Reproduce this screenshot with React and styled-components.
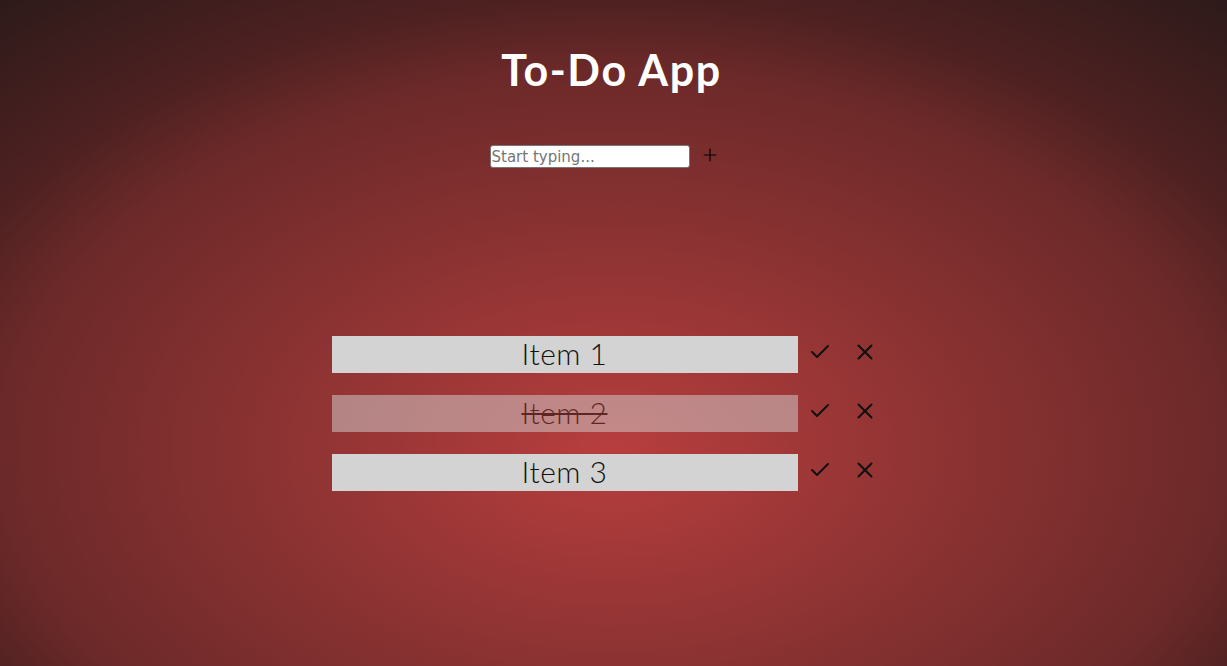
import styled, { createGlobalStyle } from "styled-components";
import { Check, X, Plus } from "lucide-react";

const GlobalStyle = createGlobalStyle`
  html, body {
    margin: 0;
    padding: 0;
  }
  body {
    min-height: 666px;
    background: radial-gradient(
      ellipse 900px 560px at 613px 450px,
      #b83e3e 0%,
      #8b3232 39%,
      #6c2929 68%,
      #4f2121 80%,
      #2e1a1a 105%
    );
    background-color: #2e1a1a;
    font-family: Lato, "Open Sans", sans-serif;
  }
`;

const items = [
  { id: 1, text: "Item 1", done: false },
  { id: 2, text: "Item 2", done: true },
  { id: 3, text: "Item 3", done: false },
];

const App = () => {
  return (
    <>
      <GlobalStyle />
      <Page>
        <Title>To-Do App</Title>
        <Form>
          <Input placeholder="Start typing..." />
          <AddButton aria-label="add">
            <Plus size={20} strokeWidth={1.4} />
          </AddButton>
        </Form>
        <List>
          {items.map((item) => (
            <Row key={item.id}>
              <ItemBox $done={item.done}>
                <ItemText $done={item.done}>{item.text}</ItemText>
              </ItemBox>
              <IconButton aria-label="done">
                <Check size={24} strokeWidth={2} />
              </IconButton>
              <IconButton aria-label="delete">
                <X size={26} strokeWidth={1.9} />
              </IconButton>
            </Row>
          ))}
        </List>
      </Page>
    </>
  );
};

export default App;

const Page = styled.div`
  display: flex;
  flex-direction: column;
  align-items: center;
  height: 666px;
  padding-top: 44px;
  box-sizing: border-box;
`;

const Title = styled.h1`
  margin: 0 4px 0 0;
  color: white;
  font-family: Lato, sans-serif;
  font-weight: 700;
  font-size: 43px;
  letter-spacing: 1.6px;
  line-height: 52px;
`;

const Form = styled.div`
  display: flex;
  align-items: center;
  gap: 10px;
  margin-top: 49px;
  margin-right: 18px;
`;

const Input = styled.input`
  width: 200px;
  height: 23px;
  box-sizing: border-box;
  border: 1px solid #767676;
  border-radius: 3px;
  padding: 1px 1px;
  font-family: "DejaVu Sans", sans-serif;
  font-size: 15px;
  background: white;
  &::placeholder {
    color: #757575;
  }
`;

const AddButton = styled.button`
  display: flex;
  align-items: center;
  justify-content: center;
  background: none;
  border: none;
  padding: 0;
  margin-top: -4px;
  color: #000;
  cursor: pointer;
`;

const List = styled.div`
  display: flex;
  flex-direction: column;
  gap: 22px;
  margin-top: 168px;
  margin-right: 8px;
`;

const Row = styled.div`
  display: flex;
  align-items: center;
`;

const ItemBox = styled.div`
  width: 466px;
  height: 37px;
  display: flex;
  align-items: center;
  justify-content: center;
  background: lightgrey;
  opacity: ${(p) => (p.$done ? 0.5 : 1)};
`;

const ItemText = styled.span`
  font-family: Lato, sans-serif;
  font-weight: 300;
  font-size: 30px;
  letter-spacing: 0.5px;
  color: #111;
  margin-top: -3px;
  text-decoration: ${(p) => (p.$done ? "line-through" : "none")};
  text-decoration-thickness: 2px;
`;

const IconButton = styled.button`
  width: 45px;
  height: 37px;
  display: flex;
  align-items: center;
  justify-content: center;
  background: none;
  border: none;
  padding: 0;
  margin-top: -6px;
  color: #111;
  cursor: pointer;
`;
